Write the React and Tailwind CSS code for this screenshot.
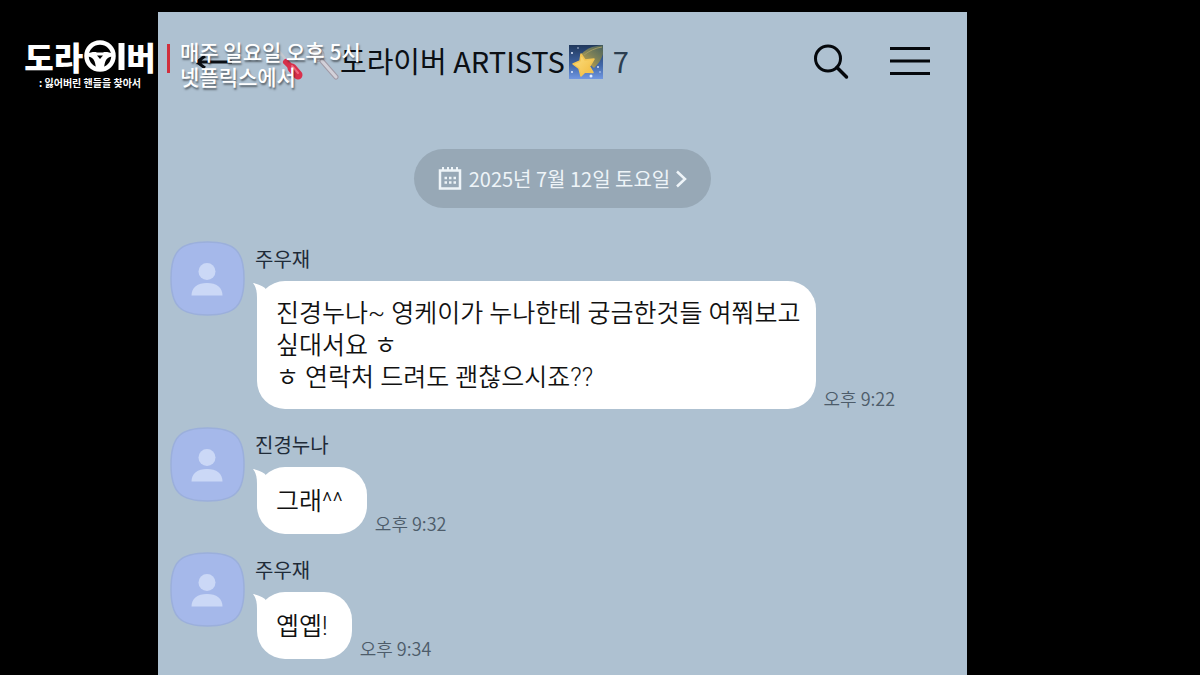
const messages = [
  {
    id: 1,
    name: "주우재",
    lines: ["진경누나~ 영케이가 누나한테 궁금한것들 여쭤보고", "싶대서요 ㅎ", "ㅎ 연락처 드려도 괜찮으시죠??"],
    time: "오후 9:22",
  },
  { id: 2, name: "진경누나", lines: ["그래^^"], time: "오후 9:32" },
  { id: 3, name: "주우재", lines: ["옙옙!"], time: "오후 9:34" },
];

function BackIcon() {
  return (
    <svg className="h-6 w-10" viewBox="0 0 40 24" fill="none" stroke="#0b0f14" strokeWidth="3">
      <path d="M38 12H3M11 6L3 12l8 6" />
    </svg>
  );
}

function ScrewdriverIcon() {
  return (
    <svg className="h-9 w-8" viewBox="0 0 32 36">
      <path d="M2 6l10 12" stroke="#c3c8cf" strokeWidth="2.5" strokeLinecap="round" />
      <path d="M10 18l5 5" stroke="#d6304a" strokeWidth="6" strokeLinecap="round" />
      <path d="M16 24l6 7" stroke="#d9304c" strokeWidth="9" strokeLinecap="round" />
      <path d="M16 22l6 7" stroke="#ee6b80" strokeWidth="2" strokeLinecap="round" />
    </svg>
  );
}

function SpoonIcon() {
  return (
    <svg className="h-9 w-8" viewBox="0 0 32 36">
      <ellipse cx="9" cy="10" rx="6.5" ry="8" transform="rotate(-38 9 10)" fill="#c5c9d2" stroke="#a2a6b2" />
      <ellipse cx="8.5" cy="10" rx="4" ry="5.5" transform="rotate(-38 8.5 10)" fill="#dadde3" />
      <path d="M14 17L28 33" stroke="#a09aa6" strokeWidth="5" strokeLinecap="round" />
      <path d="M14 17L28 33" stroke="#d3d1d9" strokeWidth="3" strokeLinecap="round" />
    </svg>
  );
}

function ShootingStarIcon() {
  return (
    <svg className="ml-1 h-[34px] w-[34px]" viewBox="0 0 34 34">
      <defs>
        <linearGradient id="sky" x1="0" y1="0" x2="0" y2="1">
          <stop offset="0" stopColor="#20385c" />
          <stop offset="0.6" stopColor="#4167a8" />
          <stop offset="1" stopColor="#7097e2" />
        </linearGradient>
        <linearGradient id="trail" x1="1" y1="0" x2="0.2" y2="1">
          <stop offset="0" stopColor="#455f5e" />
          <stop offset="0.5" stopColor="#7d8158" />
          <stop offset="1" stopColor="#c9a64a" />
        </linearGradient>
        <linearGradient id="star" x1="0" y1="0" x2="1" y2="1">
          <stop offset="0" stopColor="#fbe084" />
          <stop offset="1" stopColor="#f2ba3c" />
        </linearGradient>
      </defs>
      <path d="M0 0h34v34H0z" fill="url(#sky)" />
      <path d="M11 11C16 4 23 1 34 0v9c-2 6-4 9-9 14z" fill="url(#trail)" />
      <path d="M15 10C20 6 26 3 33 2" stroke="#a39b62" strokeWidth="1" fill="none" />
      <path
        d="M12 9l4 6 9-1-4.500 7.500 3.500 6-8-.5-4 4-2-7.500-6-4.500 7-3z"
        fill="url(#star)"
        stroke="#f3c552"
        strokeWidth="1.5"
        strokeLinejoin="round"
      />
      <g fill="#e3ecff">
        <circle cx="3" cy="8" r="1" />
        <circle cx="9" cy="3" r="0.7" />
        <circle cx="3" cy="27" r="1" />
        <circle cx="22" cy="31" r="1.5" />
        <circle cx="29" cy="22" r="0.9" />
        <circle cx="31" cy="27" r="0.7" />
      </g>
    </svg>
  );
}

function SearchIcon() {
  return (
    <svg className="h-9 w-9" viewBox="0 0 36 36" fill="none" stroke="#05080c" strokeWidth="3">
      <circle cx="15" cy="14.5" r="12.5" />
      <path d="M24 23.500l9.500 9.500" strokeWidth="3.5" strokeLinecap="round" />
    </svg>
  );
}

function MenuIcon() {
  return (
    <svg className="h-8 w-10" viewBox="0 0 40 32" stroke="#05080c" strokeWidth="3">
      <path d="M0 2.500h40M0 15h40M0 27.500h40" />
    </svg>
  );
}

function CalendarIcon() {
  return (
    <svg className="h-6 w-6" viewBox="0 0 24 24" fill="none" stroke="#eef4f8">
      <path d="M2 3.500h20v18H2z" strokeWidth="2.5" />
      <path d="M5 0v4M10 0v4M14 0v4M19 0v4" strokeWidth="2" />
      <path d="M6.500 11h11.500M6.500 15.500h11.500" strokeWidth="2.5" strokeDasharray="2.5 2" />
    </svg>
  );
}

function Avatar() {
  return (
    <svg className="h-[75px] w-[75px] shrink-0" viewBox="0 0 75 75">
      <path
        d="M37.500 1C65 1 74 10 74 37.500S65 74 37.500 74 1 65 1 37.500 10 1 37.500 1z"
        fill="#a5b8ea"
        stroke="#9bafdb"
        strokeWidth="1.5"
      />
      <circle cx="37" cy="30.5" r="8.5" fill="#cbd8f6" />
      <path d="M21.500 54.500c0-8 6-12.500 15.500-12.500s15.500 4.500 15.500 12.500z" fill="#cbd8f6" />
    </svg>
  );
}

function BubbleTail() {
  return (
    <svg className="absolute -left-[5px] top-0 h-8 w-5" viewBox="0 0 20 32" fill="#fff">
      <path d="M1 2C5 2.500 9 4 13 7L20 20 5 30V17C5 10 4 6 1 2z" />
    </svg>
  );
}

function Message({ name, lines, time }) {
  const padding = lines.length > 1 ? "pr-[15px]" : "pr-6";
  return (
    <li className="flex items-start gap-[10px]">
      <Avatar />
      <div>
        <p className="h-10 pt-1 text-[20px] leading-7 text-[#1f2b38]">{name}</p>
        <div className="ml-[2px] flex items-end gap-2">
          <div
            className={`relative flex min-h-[67px] flex-col justify-center rounded-[28px] bg-white pt-[17px] pb-[15px] pl-[19px] font-[Roboto,'Noto_Sans_CJK_KR',sans-serif] text-[25px] font-[350] leading-8 text-[#111] ${padding}`}
          >
            <BubbleTail />
            {lines.map((line) => (
              <p key={line}>{line}</p>
            ))}
          </div>
          <time className="text-[18px] font-[350] leading-[22px] text-[#4d5c6a]">{time}</time>
        </div>
      </div>
    </li>
  );
}

function Wheel() {
  return (
    <svg className="h-8 w-[43px]" viewBox="0 0 43 32" role="img" aria-label="이">
      <circle cx="17" cy="16" r="13.5" fill="none" stroke="#fff" strokeWidth="4.5" />
      <path d="M4 14C8 12 12 11.500 14 12.500h6c2-1 6-.5 10 1.500v2.500c-6 0-8.500 4-9 12.500h-8c-.5-8.500-3-12.500-9-12.500z" fill="#fff" />
      <path d="M14 15.500h6l-3 3.500z" fill="#000" />
      <path d="M35.500 3h6v27h-6z" fill="#fff" />
    </svg>
  );
}

function Promo() {
  return (
    <aside className="absolute left-6 top-9 flex items-start text-white">
      <div className="flex w-[132px] flex-col items-center">
        <div className="flex items-center text-[32px] font-black leading-[40px]">
          <span>도라</span>
          <Wheel />
          <span>버</span>
        </div>
        <p className="text-[10px] font-bold leading-[14px]">: 잃어버린 핸들을 찾아서</p>
      </div>
      <div className="ml-[11px] mt-2 h-[29px] w-[3px] bg-[#d12f3c]" />
      <p className="ml-[10px] mt-[3px] whitespace-nowrap text-[21px] font-medium leading-[25px] text-shadow-[1px_2px_2px_rgb(0_0_0/0.5)]">
        매주 일요일 오후 5시
        <br />
        넷플릭스에서
      </p>
    </aside>
  );
}

export default function App() {
  return (
    <div className="relative min-h-screen bg-black pl-[158px] pr-[233px] pt-3 font-['Noto_Sans_CJK_KR',sans-serif]">
      <main className="min-h-[calc(100vh-12px)] bg-[#aec1d1]">
        <header className="flex h-[100px] items-center pl-9 pr-[37px]">
          <button type="button" aria-label="뒤로">
            <BackIcon />
          </button>
          <h1 className="ml-[42px] flex items-center whitespace-nowrap text-[29px] leading-10 text-[#0b0f14]">
            <ScrewdriverIcon />
            <SpoonIcon />
            <span className="pb-1">도라이버 ARTISTS</span>
            <ShootingStarIcon />
            <span className="ml-[10px] pb-1 text-[#2c3e50]">7</span>
          </h1>
          <div className="ml-auto flex items-center gap-[41px]">
            <button type="button" aria-label="검색">
              <SearchIcon />
            </button>
            <button type="button" aria-label="메뉴">
              <MenuIcon />
            </button>
          </div>
        </header>
        <div className="mt-[37px] flex justify-center">
          <button
            type="button"
            className="flex h-[59px] items-center rounded-full bg-[#97a8b6] px-6 text-[20px] text-[#eef4f8]"
          >
            <CalendarIcon />
            <span className="ml-[7px]">2025년 7월 12일 토요일</span>
            <svg className="ml-px h-5 w-4" viewBox="0 0 16 20" fill="none" stroke="#eef4f8" strokeWidth="2.5">
              <path d="M6 2.500l8 7.500-8 7.500" />
            </svg>
          </button>
        </div>
        <ul className="mt-[33px] flex flex-col gap-[18px] pl-[12px]">
          {messages.map((message) => (
            <Message key={message.id} {...message} />
          ))}
        </ul>
      </main>
      <Promo />
    </div>
  );
}
